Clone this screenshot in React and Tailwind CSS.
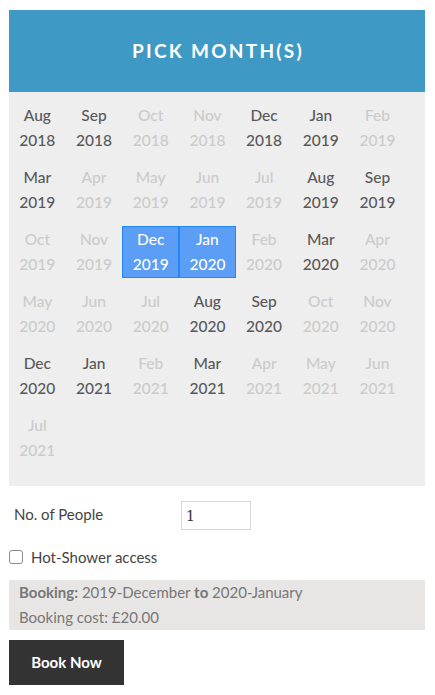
import React, { useState } from 'react';

const MONTHS = [
  ['Aug', '2018', 1], ['Sep', '2018', 1], ['Oct', '2018', 0], ['Nov', '2018', 0], ['Dec', '2018', 1], ['Jan', '2019', 1], ['Feb', '2019', 0],
  ['Mar', '2019', 1], ['Apr', '2019', 0], ['May', '2019', 0], ['Jun', '2019', 0], ['Jul', '2019', 0], ['Aug', '2019', 1], ['Sep', '2019', 1],
  ['Oct', '2019', 0], ['Nov', '2019', 0], ['Dec', '2019', 2], ['Jan', '2020', 2], ['Feb', '2020', 0], ['Mar', '2020', 1], ['Apr', '2020', 0],
  ['May', '2020', 0], ['Jun', '2020', 0], ['Jul', '2020', 0], ['Aug', '2020', 1], ['Sep', '2020', 1], ['Oct', '2020', 0], ['Nov', '2020', 0],
  ['Dec', '2020', 1], ['Jan', '2021', 1], ['Feb', '2021', 0], ['Mar', '2021', 1], ['Apr', '2021', 0], ['May', '2021', 0], ['Jun', '2021', 0],
  ['Jul', '2021', 0],
];

const cellStyle = (state) => {
  if (state === 2) return 'border border-[#1f88f4] bg-[#5c9df5] text-white';
  if (state === 1) return 'border border-transparent text-[#595959]';
  return 'border border-transparent text-[#cbcbcb]';
};

const App = () => {
  const [people, setPeople] = useState('1');
  const [shower, setShower] = useState(false);

  return (
    <div className="min-h-[695px] bg-white pl-[9px] pr-[10px] pt-[10px] font-['Lato',sans-serif]">
      <div className="flex h-[82px] items-center justify-center bg-[#3e9ac5]">
        <h2 className="pl-[2px] text-[19px] font-bold uppercase tracking-[0.12em] text-white">Pick Month(s)</h2>
      </div>

      <div className="bg-[#eeeeee] pb-[22px] pt-[10px]">
        <div className="grid grid-cols-[repeat(7,56.7px)] gap-y-[10px]">
          {MONTHS.map(([m, y, s], i) => (
            <div key={i} className={`flex h-[52px] cursor-pointer flex-col items-center justify-center text-[15.5px] font-medium leading-[25px] ${cellStyle(s)}`}>
              <span>{m}</span>
              <span>{y}</span>
            </div>
          ))}
        </div>
      </div>

      <div className="mt-[15px] flex items-start">
        <label className="w-[172px] pl-[5px] pt-[2px] text-[15px] text-[#444]">No. of People</label>
        <input
          type="text"
          value={people}
          onChange={(e) => setPeople(e.target.value)}
          className="h-[29px] w-[70px] border border-[#d6d6d6] px-[4px] font-['DejaVu_Serif',serif] text-[14px] text-[#333] focus:outline-none"
        />
      </div>

      <label className="mt-[16px] flex items-center gap-[8px] text-[15px] text-[#444]">
        <input
          type="checkbox"
          checked={shower}
          onChange={(e) => setShower(e.target.checked)}
          className="h-[14px] w-[14px] appearance-none rounded-[3px] border border-[#8a8a8a] bg-white"
        />
        <span>Hot-Shower access</span>
      </label>

      <div className="mt-[11px] bg-[#e8e6e4] px-[10px] text-[15px] leading-[25px] text-[#777]">
        <div><span className="font-bold">Booking:</span> 2019-December <span className="font-bold">to</span> 2020-January</div>
        <div>Booking cost: £20.00</div>
      </div>

      <button className="mt-[10px] h-[45px] w-[115px] bg-[#333333] text-[15px] font-bold text-white">
        Book Now
      </button>
    </div>
  );
};

export default App;
